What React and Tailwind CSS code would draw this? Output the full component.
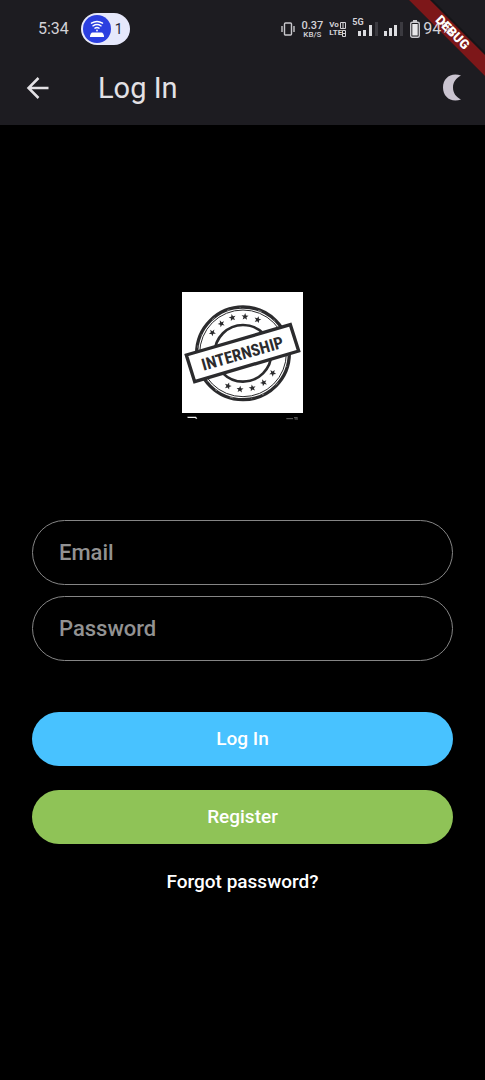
import React from "react";

const STAR = "M0-11 2.8-3.6 10.5-3.4 4.5 1.4 6.5 8.9 0 4.6-6.5 8.9-4.5 1.4-10.5-3.4-2.8-3.6Z";
const STARS = [
  [121, 149, -38], [148, 122, -25], [181, 104, -12], [219, 101, 3], [257, 110, 16],
  [168, 309, 18], [204, 319, 5], [241, 315, -10], [275, 299, -25], [302, 270, -38],
];

function Stamp() {
  return (
    <svg viewBox="30 27 363 384" className="h-32 w-[121px]" role="img" aria-label="Internship stamp">
      <rect x="30" y="27" width="363" height="363" fill="#fff" />
      <g fill="none" stroke="#2b2b2d">
        <circle cx="213" cy="211" r="139" strokeWidth="10" />
        <circle cx="213" cy="211" r="130" strokeWidth="3" />
        <circle cx="213" cy="211" r="85" strokeWidth="8" />
        <circle cx="213" cy="211" r="137" stroke="#aaa" strokeWidth="2" strokeDasharray="7 31 3 54 11 43" />
      </g>
      {STARS.map(([x, y, r]) => (
        <path key={x} d={STAR} fill="#2b2b2d" transform={`translate(${x} ${y}) rotate(${r})`} />
      ))}
      <path d="M43 216 355 125 380 204 68 296Z" fill="#fff" stroke="#2b2b2d" strokeWidth="10" />
      <text
        transform="translate(211 210) rotate(-16)"
        y="19"
        textAnchor="middle"
        fontSize="50"
        fontWeight="700"
        fill="#2b2b2d"
        fontFamily="'Liberation Sans Narrow', 'Roboto Condensed', Roboto, sans-serif"
      >
        INTERNSHIP
      </text>
      <path d="M46 401h26l4 6h-4l-3-2H47Z" fill="#eee" />
      <path d="M343 407h20M366 404h11M368 408h10" stroke="#999" strokeWidth="2" />
    </svg>
  );
}

function StatusBar() {
  return (
    <div className="relative z-10 flex h-[58px] items-center justify-between pl-[38px] pr-8 text-[#d3d2d7]">
      <div className="flex items-center gap-3">
        <span className="text-base">5:34</span>
        <span className="flex h-8 w-[49px] items-center gap-1 rounded-full bg-[#e6e8fb] pl-0.5 text-[#26273a]">
          <svg viewBox="0 0 28 28" className="size-7" aria-hidden="true">
            <circle cx="14" cy="14" r="14" fill="#2b3fe0" />
            <g fill="none" stroke="#fff" strokeWidth="1.5" strokeLinecap="round">
              <path d="M8.500 8.200Q14 4.800 19.500 8.200M10 10.800Q14 8.400 18 10.800M12 13.200Q14 12 16 13.200" />
            </g>
            <circle cx="14" cy="15.500" r=".9" fill="#fff" />
            <path d="M9.500 17.500h9q1 0 1.500 1l1 2v1.500H7v-1.500l1-2q.5-1 1.500-1z" fill="#fff" />
          </svg>
          <span className="text-sm">1</span>
        </span>
      </div>
      <div className="flex items-center gap-1.5">
        <svg viewBox="0 0 14 14" className="size-3.5" fill="none" stroke="#c9c8cd" strokeWidth="1.4" aria-hidden="true">
          <rect x="3.500" y="1" width="7" height="12" rx="1" />
          <path d="M1 4v6M13 4v6" />
        </svg>
        <div className="flex flex-col items-center font-medium">
          <span className="text-[11px] leading-[11px]">0.37</span>
          <span className="text-[8px] leading-[8px]">KB/S</span>
        </div>
        <div className="flex w-[17px] flex-col text-[8px] font-bold leading-[8px]">
          <span className="flex items-center justify-between">
            Vo
            <svg viewBox="0 0 6 7" className="h-[7px] w-1.5" fill="none" stroke="currentColor" aria-hidden="true">
              <path d="M.5.5h5v6h-5zM3 1v5" />
            </svg>
          </span>
          <span className="flex items-center justify-between">
            LTE
            <svg viewBox="0 0 4 7" className="h-[7px] w-1" fill="none" stroke="currentColor" aria-hidden="true">
              <path d="M.5.5h3v6h-3zM1 3.500h2" />
            </svg>
          </span>
        </div>
        <div className="relative flex w-[26px] justify-end">
          <span className="absolute -top-1 left-0 text-[9px] font-bold leading-[9px]">5G</span>
          <svg viewBox="0 0 20 14" className="h-3.5 w-5" aria-hidden="true">
            <path d="M0 9h3v5H0zM5 8h3v6H5zM11 3h3v11h-3z" fill="#dcdce0" />
            <path d="M17 0h3v14h-3z" fill="#3b3a40" />
          </svg>
        </div>
        <svg viewBox="0 0 20 14" className="h-3.5 w-5" aria-hidden="true">
          <path d="M0 9h3v5H0zM5 6h3v8H5zM10 3h3v11h-3z" fill="#dcdce0" />
          <path d="M16 0h3v14h-3z" fill="#3b3a40" />
        </svg>
        <div className="flex items-center gap-[3px]">
          <svg viewBox="0 0 10 18" className="h-[18px] w-2.5" aria-hidden="true">
            <path d="M3 0h4v2H3z" fill="#c9c8cd" />
            <rect x=".7" y="2.200" width="8.600" height="15" rx="1.500" fill="none" stroke="#c9c8cd" strokeWidth="1.400" />
            <rect x="2.300" y="4" width="5.400" height="11.500" fill="#e8e7ea" />
          </svg>
          <span className="text-base">94%</span>
        </div>
      </div>
    </div>
  );
}

function DebugBanner() {
  return (
    <>
      <svg viewBox="0 0 80 80" className="pointer-events-none absolute right-0 top-0 size-20" aria-hidden="true">
        <path d="M2 -2H26L82 54V78Z" fill="#000" opacity=".25" />
        <path d="M4 0H25L80 55V76Z" fill="#7d1719" />
      </svg>
      <svg viewBox="0 0 80 80" className="pointer-events-none absolute right-0 top-0 z-20 size-20">
        <text
          transform="translate(48 32) rotate(45)"
          y="5"
          textAnchor="middle"
          fontSize="13"
          fontWeight="900"
          fontFamily="Roboto, sans-serif"
          fill="#fff"
        >
          DEBUG
        </text>
      </svg>
    </>
  );
}

function Field({ id, label, type }) {
  return (
    <div className="grid items-center text-[22px] font-medium">
      <input
        id={id}
        type={type}
        placeholder=" "
        className="peer col-start-1 row-start-1 h-[65px] w-full rounded-full border border-[#858585] bg-transparent px-[27px] text-white outline-none focus:border-white"
      />
      <label
        htmlFor={id}
        className="pointer-events-none col-start-1 row-start-1 px-[27px] text-[#929292] opacity-0 peer-placeholder-shown:opacity-100"
      >
        {label}
      </label>
    </div>
  );
}

export default function App() {
  return (
    <div className="relative flex min-h-screen flex-col bg-black font-[Roboto,sans-serif]">
      <header className="bg-[#1d1c21]">
        <StatusBar />
        <div className="flex h-[67px] items-center pb-2 pl-[26px] pr-6">
          <button type="button" aria-label="Back" className="mr-12">
            <svg viewBox="0 0 24 24" className="size-6" fill="none" stroke="#e3e1e5" strokeWidth="2.500" aria-hidden="true">
              <path d="M22.500 12H3M12.500 2 2.500 12l10 10" />
            </svg>
          </button>
          <h1 className="flex-1 text-[29px] leading-9 text-[#e3e1e5]">Log In</h1>
          <button type="button" aria-label="Toggle dark mode">
            <svg viewBox="0 0 18 27" className="h-[27px] w-[18px]" aria-hidden="true">
              <path d="M18 1.500C8 -2 0 4 0 13.500S8 29 18 25.500C13 23 10 19 10 13.500S13 4 18 1.500Z" fill="#cac4d0" />
            </svg>
          </button>
        </div>
      </header>
      <main className="flex flex-1 flex-col items-center justify-center px-8 pb-[18px]">
        <Stamp />
        <form className="mt-[100px] flex w-full flex-col" onSubmit={(e) => e.preventDefault()}>
          <div className="flex flex-col gap-[11px]">
            <Field id="email" label="Email" type="email" />
            <Field id="password" label="Password" type="password" />
          </div>
          <div className="mt-[51px] flex flex-col gap-6 text-[19px] font-medium text-white">
            <button type="submit" className="h-[54px] rounded-full bg-[#48c2ff] pt-0.5">Log In</button>
            <button type="button" className="h-[54px] rounded-full bg-[#8fc357] pt-0.5">Register</button>
          </div>
        </form>
        <a href="#forgot" className="mt-6 text-[19px] font-medium leading-7 text-white">Forgot password?</a>
      </main>
      <DebugBanner />
    </div>
  );
}
